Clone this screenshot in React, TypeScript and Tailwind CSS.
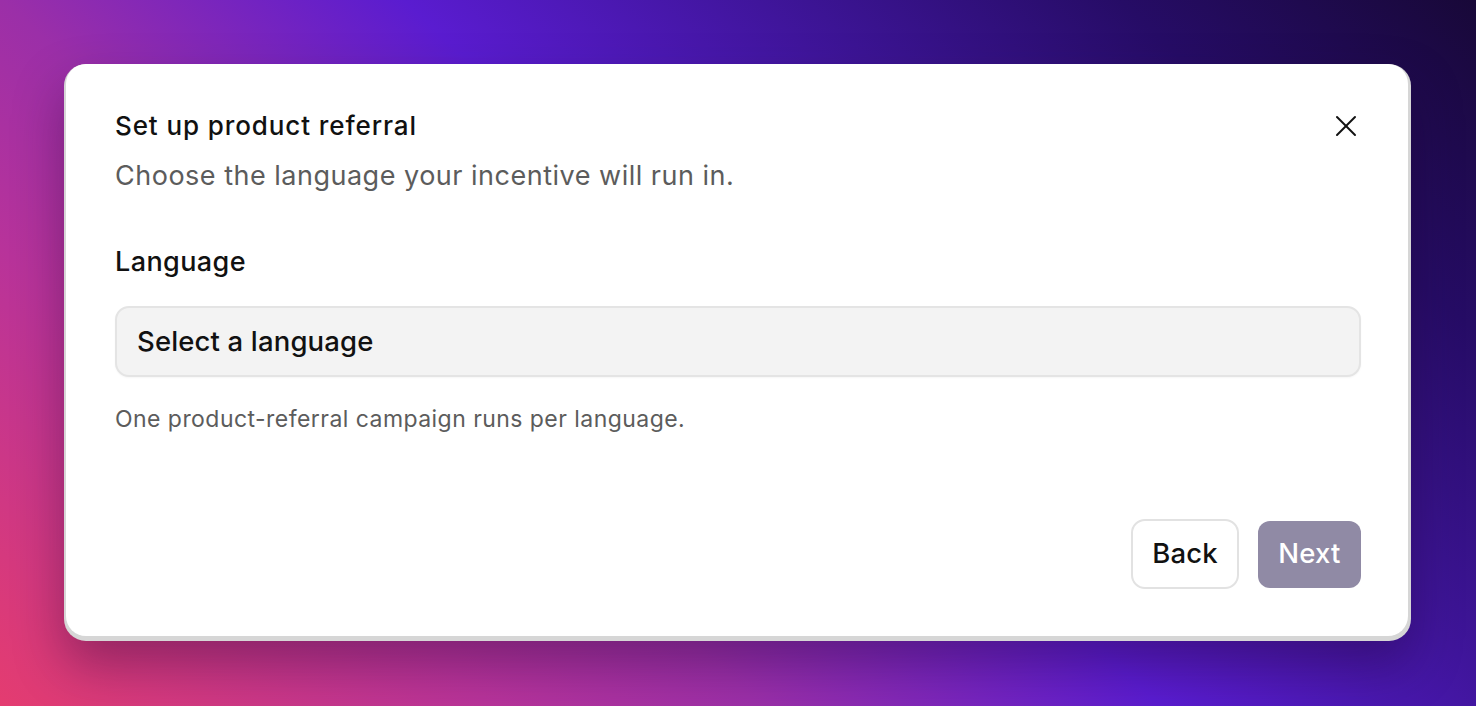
import React from "react";

export default function App() {
  return (
    <div
      className="w-full h-[706px] pt-16 pl-16 pr-[65px] pb-[65px] flex bg-[linear-gradient(43deg,#e43c70_0%,#b8339a_22%,#9b2fa8_34%,#5a1cd0_52%,#3c1494_70%,#260c66_84%,#180838_100%)]"
      style={{ fontFamily: "Inter, 'Noto Sans', sans-serif" }}
    >
      <div className="flex-1 flex rounded-[22px] bg-[#d6d6d6] pl-[2px] pr-[3px] pb-[5px] shadow-[0_24px_50px_rgba(30,0,40,0.35)]">
        <div className="flex-1 flex flex-col rounded-[20px] bg-white pl-[49px] pr-[47px] pt-[46px] pb-[47px]">
          <div className="flex items-start justify-between">
            <div className="flex flex-col">
              <h1 className="text-[26px] leading-[32px] font-medium text-[#111111] tracking-[0.9px]">
                Set up product referral
              </h1>
              <p className="mt-[16px] text-[27px] leading-[36px] text-[#5c5c5c] tracking-[0.5px]">
                Choose the language your incentive will run in.
              </p>
            </div>
            <button className="mt-[5px] mr-[4px] w-[22px] h-[22px] flex items-center justify-center text-[#111111]">
              <svg width="22" height="22" viewBox="0 0 22 22" fill="none" stroke="currentColor" strokeWidth="2" strokeLinecap="round">
                <path d="M2 2L20 20" />
                <path d="M20 2L2 20" />
              </svg>
            </button>
          </div>

          <label className="mt-[50px] text-[27px] leading-[36px] font-medium text-[#111111] tracking-[0.4px]">
            Language
          </label>

          <div className="mt-[26px] h-[71px] rounded-[14px] bg-[#f3f3f3] border-2 border-[#e4e4e4] flex items-center px-[20px] shadow-[0_1px_2px_rgba(0,0,0,0.04)]">
            <span className="text-[27.5px] font-medium text-[#111111] tracking-[0.15px]">Select a language</span>
          </div>

          <p className="mt-[27px] text-[23px] leading-[30px] text-[#5c5c5c] tracking-[0.45px]">
            One product-referral campaign runs per language.
          </p>

          <div className="mt-auto flex justify-end items-center gap-[19px]">
            <button className="h-[70px] w-[108px] rounded-[14px] bg-white border-2 border-[#e2e2e2] text-[27.5px] font-medium text-[#111111] tracking-[0.2px] flex items-center justify-center">
              Back
            </button>
            <button className="h-[67px] w-[103px] rounded-[12px] bg-[#908aa5] text-[27.5px] font-medium text-white tracking-[0.2px] flex items-center justify-center">
              Next
            </button>
          </div>
        </div>
      </div>
    </div>
  );
}
